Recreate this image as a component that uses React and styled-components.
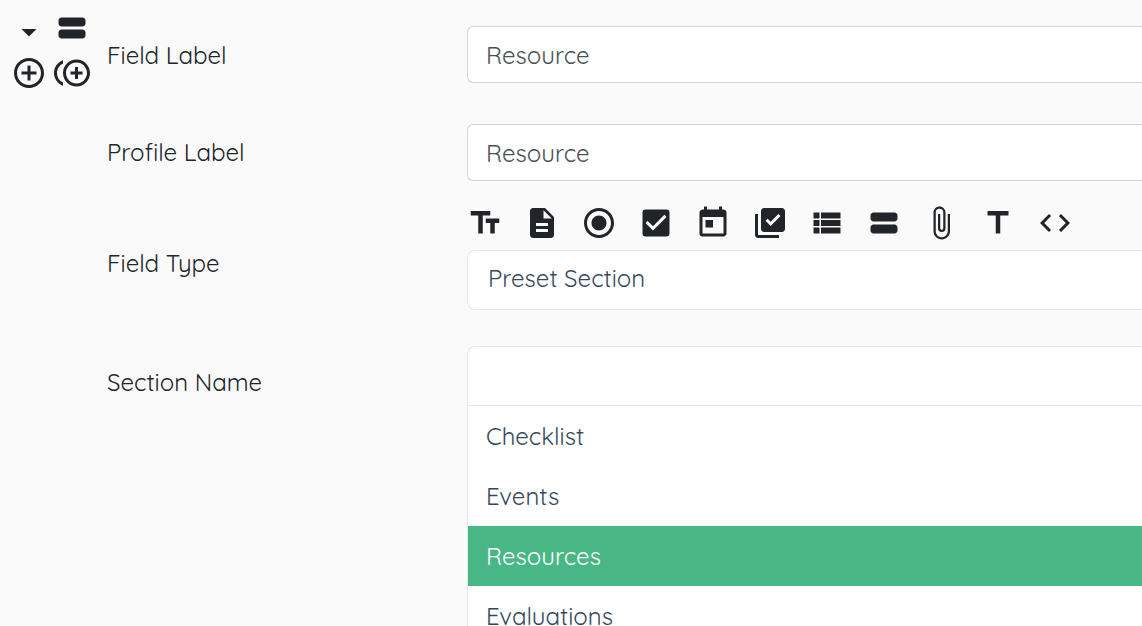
import React from 'react'
import styled, { createGlobalStyle, ThemeProvider } from 'styled-components'
import {
  MdAddCircleOutline,
  MdArrowDropDown,
  MdAttachFile,
  MdCheckBox,
  MdCode,
  MdControlPointDuplicate,
  MdDescription,
  MdLibraryAddCheck,
  MdRadioButtonChecked,
  MdTextFields,
  MdTitle,
  MdToday,
  MdViewList,
  MdViewStream
} from 'react-icons/md'

const theme = {
  background: '#fafafa',
  white: '#fff',
  text: '#212529',
  inputText: '#495057',
  selectText: '#35495e',
  inputBorder: '#ced4da',
  selectBorder: '#e8e8e8',
  highlight: '#48b785'
}

const fieldTypes = [
  { name: 'Text', icon: MdTextFields },
  { name: 'Text Area', icon: MdDescription },
  { name: 'Radio', icon: MdRadioButtonChecked },
  { name: 'Checkbox', icon: MdCheckBox },
  { name: 'Date', icon: MdToday },
  { name: 'Checklist', icon: MdLibraryAddCheck },
  { name: 'List', icon: MdViewList },
  { name: 'Preset Section', icon: MdViewStream },
  { name: 'File', icon: MdAttachFile },
  { name: 'Title', icon: MdTitle },
  { name: 'HTML', icon: MdCode }
]

const sections = ['Checklist', 'Events', 'Resources', 'Evaluations']

export default class App extends React.Component {
  state = {
    fieldLabel: '',
    profileLabel: '',
    fieldType: 'Preset Section',
    search: '',
    highlighted: 'Resources'
  }
  setValue = e => {
    this.setState({ [e.target.name]: e.target.value })
  }
  render() {
    const { fieldLabel, profileLabel, fieldType, search } = this.state
    return (
      <ThemeProvider theme={theme}>
        <GlobalStyle />
        <Page>
          <Tools>
            <IconButton $align="end" aria-label="Collapse">
              <MdArrowDropDown />
            </IconButton>
            <IconButton aria-label="Preset section">
              <MdViewStream />
            </IconButton>
            <IconButton aria-label="Add field">
              <MdAddCircleOutline />
            </IconButton>
            <IconButton aria-label="Duplicate field">
              <MdControlPointDuplicate />
            </IconButton>
          </Tools>
          <Form onSubmit={e => e.preventDefault()}>
            <Row $space="41px">
              <Label htmlFor="fieldLabel">Field Label</Label>
              <Input
                id="fieldLabel"
                name="fieldLabel"
                placeholder="Resource"
                value={fieldLabel}
                onChange={this.setValue}
              />
            </Row>
            <Row $space="24px">
              <Label $top="10px" htmlFor="profileLabel">
                Profile Label
              </Label>
              <Input
                id="profileLabel"
                name="profileLabel"
                placeholder="Resource"
                value={profileLabel}
                onChange={this.setValue}
              />
            </Row>
            <Row $space="36px">
              <Label $top="40px" htmlFor="fieldType">
                Field Type
              </Label>
              <div>
                <TypeIcons>
                  {fieldTypes.map(({ name, icon: Icon }) => (
                    <IconButton
                      key={name}
                      aria-label={name}
                      onClick={() => this.setState({ fieldType: name })}
                    >
                      <Icon />
                    </IconButton>
                  ))}
                </TypeIcons>
                <Select
                  id="fieldType"
                  name="fieldType"
                  value={fieldType}
                  onChange={this.setValue}
                >
                  {fieldTypes.map(({ name }) => (
                    <option key={name}>{name}</option>
                  ))}
                </Select>
              </div>
            </Row>
            <Row>
              <Label $top="18px" htmlFor="search">
                Section Name
              </Label>
              <div>
                <Search
                  id="search"
                  name="search"
                  role="combobox"
                  aria-expanded="true"
                  aria-controls="sections"
                  value={search}
                  onChange={this.setValue}
                />
                <Options id="sections" role="listbox">
                  {sections.map(name => (
                    <Option
                      key={name}
                      role="option"
                      aria-selected={name === this.state.highlighted}
                      onMouseEnter={() => this.setState({ highlighted: name })}
                    >
                      {name}
                    </Option>
                  ))}
                </Options>
              </div>
            </Row>
          </Form>
        </Page>
      </ThemeProvider>
    )
  }
}

const GlobalStyle = createGlobalStyle`
  * {
    box-sizing: border-box;
  }
  body {
    margin: 0;
    background: ${props => props.theme.background};
    color: ${props => props.theme.text};
  }
  body, input, select, button {
    font-family: Quicksand, 'Open Sans', sans-serif;
    font-size: 24px;
    font-weight: 400;
    line-height: 36px;
  }
`

const Page = styled.main`
  display: flex;
  height: 100vh;
  overflow: hidden;
`

const Tools = styled.div`
  display: grid;
  grid-template-columns: 36px 36px;
  grid-template-rows: 40px 36px;
  gap: 5px 7px;
  align-content: start;
  padding: 10px 17px 0 11px;
`

const IconButton = styled.button.attrs({ type: 'button' })`
  display: flex;
  align-self: ${props => props.$align || 'start'};
  padding: 0;
  border: none;
  background: none;
  color: inherit;
  font-size: 36px;
  cursor: pointer;
`

const Form = styled.form`
  flex: 1;
  min-width: 0;
  padding-top: 26px;
`

const Row = styled.div`
  display: grid;
  grid-template-columns: 360px 1fr;
  margin-bottom: ${props => props.$space || 0};
`

const Label = styled.label`
  padding-top: ${props => props.$top || '11px'};
`

const Input = styled.input`
  display: block;
  width: 100%;
  height: 57px;
  padding: 0 18px;
  border: 1px solid ${props => props.theme.inputBorder};
  border-right: none;
  border-radius: 6px 0 0 6px;
  background: ${props => props.theme.white};
  color: ${props => props.theme.inputText};
  outline: none;
  &::placeholder {
    color: ${props => props.theme.inputText};
    opacity: 1;
  }
`

const TypeIcons = styled.div`
  display: flex;
  gap: 21px;
  margin-bottom: 9px;
`

const Select = styled.select`
  display: block;
  appearance: none;
  width: 100%;
  height: 60px;
  padding: 0 20px 4px;
  border: 1px solid ${props => props.theme.selectBorder};
  border-right: none;
  border-radius: 8px 0 0 8px;
  background: ${props => props.theme.white};
  color: ${props => props.theme.selectText};
  outline: none;
`

const Search = styled(Input)`
  height: 60px;
  border-color: ${props => props.theme.selectBorder};
  border-radius: 8px 0 0 0;
  color: ${props => props.theme.selectText};
`

const Options = styled.ul`
  margin: 0;
  padding: 0;
  list-style: none;
  border-left: 1px solid ${props => props.theme.selectBorder};
  background: ${props => props.theme.white};
  color: ${props => props.theme.selectText};
`

const Option = styled.li`
  padding: 12px 18px;
  cursor: pointer;
  &[aria-selected='true'] {
    background: ${props => props.theme.highlight};
    color: ${props => props.theme.white};
  }
`
